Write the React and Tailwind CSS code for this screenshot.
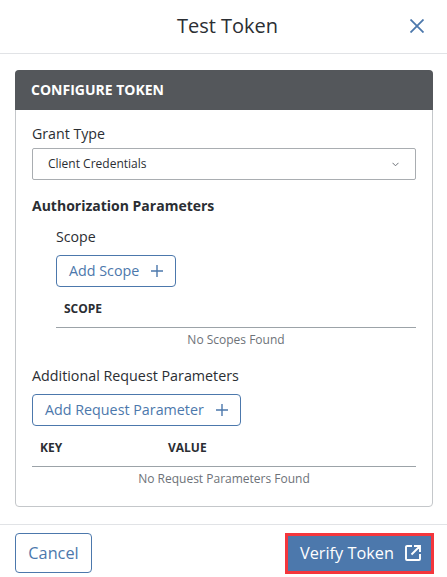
import React from 'react';

const Plus = () => (
  <svg width="12" height="12" viewBox="0 0 12 12" fill="none" stroke="currentColor" strokeWidth="1.4">
    <path d="M6 0v12M0 6h12" />
  </svg>
);

const OutlineButton = ({ label }) => (
  <button className="flex h-8 items-center gap-3 rounded border border-[#4c78ac] bg-white pl-3 pr-3 text-[14.3px] text-[#4c78ac]">
    {label}
    <Plus />
  </button>
);

const EmptyTable = ({ children, message }) => (
  <div>
    <div className="flex h-[41px] items-center border-b border-[#9ca3a8] pt-1 text-xs font-bold text-[#2b2e33]">{children}</div>
    <div className="flex h-6 items-center justify-center text-xs text-[#6d7278]">{message}</div>
  </div>
);

export default function App() {
  return (
    <div className="flex h-[577px] w-[447px] flex-col bg-white text-[#2b2e33] font-['Open_Sans',sans-serif]">
      <header className="relative flex h-[54px] shrink-0 items-center justify-center border-b border-[#e1e3e6] pb-[2px] pl-2">
        <h1 className="text-xl leading-[50px]">Test Token</h1>
        <svg className="absolute left-[410px] top-[19px] text-[#4c78ac]" width="14" height="14" viewBox="0 0 14 14" fill="none" stroke="currentColor" strokeWidth="1.8">
          <path d="M.5.5l13 13M13.500.5l-13 13" />
        </svg>
      </header>

      <main className="flex-1 pl-[15px] pr-[14px] pt-4">
        <section className="h-[437px] rounded border border-[#c4c7ca]">
          <div className="-mx-px -mt-px flex h-10 items-center rounded-t bg-[#54575b] pl-4 text-sm font-bold text-white">
            CONFIGURE TOKEN
          </div>
          <div className="px-4 pt-3">
            <label className="block text-[14.2px] leading-[24px]">Grant Type</label>
            <div className="mt-[2px] flex h-8 items-center justify-between rounded-xs border border-[#a9adb1] pl-[15px] pr-4 text-xs">
              Client Credentials
              <svg width="7" height="5" viewBox="0 0 7 5" fill="none" stroke="#6d7278">
                <path d="M.5.8l3 3 3-3" />
              </svg>
            </div>

            <h2 className="mt-[14px] text-sm font-bold leading-[24px]">Authorization Parameters</h2>
            <div className="ml-6 mt-[7px]">
              <div className="text-[14.2px] leading-[24px]">Scope</div>
              <div className="mt-[6px] flex">
                <OutlineButton label="Add Scope" />
              </div>
              <EmptyTable message="No Scopes Found">
                <span className="pl-2">SCOPE</span>
              </EmptyTable>
            </div>

            <div className="mt-[12px] text-[14.3px] leading-[24px]">Additional Request Parameters</div>
            <div className="mt-[6px] flex">
              <OutlineButton label="Add Request Parameter" />
            </div>
            <EmptyTable message="No Request Parameters Found">
              <span className="w-[136px] pl-2">KEY</span>
              <span>VALUE</span>
            </EmptyTable>
          </div>
        </section>
      </main>

      <footer className="flex h-[53px] shrink-0 items-center justify-between border-t border-[#e1e3e6] pl-[15px] pr-[13px] pt-1">
        <button className="h-10 w-[77px] rounded border border-[#4c78ac] text-[16.3px] text-[#4c78ac]">Cancel</button>
        <button className="flex h-[41px] w-[149px] items-center gap-[11px] border-[3px] border-[#f4363c] bg-[#4c78ac] pl-3 text-[16.3px] text-white">
          Verify Token
          <svg width="16" height="16" viewBox="0 0 16 16" fill="none" stroke="currentColor" strokeWidth="1.9">
            <path d="M7 1H2a1 1 0 0 0-1 1v12a1 1 0 0 0 1 1h12a1 1 0 0 0 1-1V9M9 1h6v6M15 1L6.500 9.500" />
          </svg>
        </button>
      </footer>
    </div>
  );
}
